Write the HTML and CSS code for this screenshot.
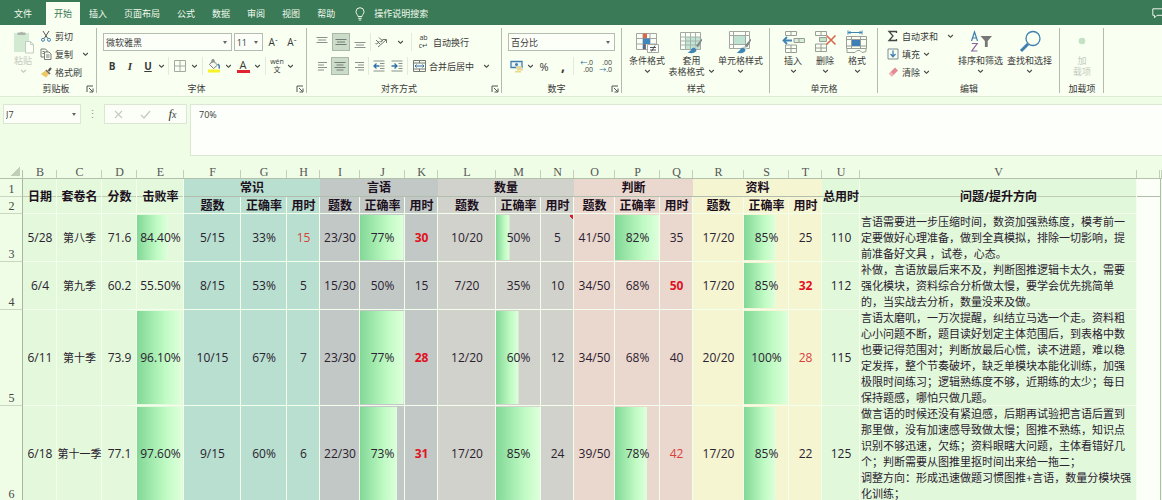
FILE: index.html
```html
<!DOCTYPE html>
<html lang="zh-CN">
<head>
<meta charset="utf-8">
<title>成绩记录表</title>
<link rel="stylesheet" href="styles.css">
</head>
<body>
<svg class="defs" aria-hidden="true">
  <symbol id="chev" viewBox="0 0 7 5"><path d="M1.2 1l2.3 2.3L5.8 1" fill="none" stroke="#444" stroke-width="1.1"/></symbol>
  <symbol id="launch" viewBox="0 0 8 8"><path d="M1 7V1h6M3 3l3.500 3.500M7 3.500V7H3.500" fill="none" stroke="#555" stroke-width="1"/></symbol>
  <symbol id="brush" viewBox="0 0 16 16"><path d="M15 .5l-6 7 2 2 4-7z" fill="#7f8a88"/><path d="M8.500 8l2.500 2.300-1 1.500-2.800-2.200z" fill="#c5cfcb"/><path d="M7 9.500c-3 0-2.500 4-6.500 5 4 1.500 9 .5 9-2.700z" fill="#3f86b5"/></symbol>
</svg>

<div class="app">
  <nav class="tabs">
    <button class="tab file">文件</button>
    <button class="tab active">开始</button>
    <button class="tab">插入</button>
    <button class="tab">页面布局</button>
    <button class="tab">公式</button>
    <button class="tab">数据</button>
    <button class="tab">审阅</button>
    <button class="tab">视图</button>
    <button class="tab">帮助</button>
    <button class="tell-me">
      <svg width="10" height="14" viewBox="0 0 10 14"><path d="M3 9.500C3 8 1 7 1 4.700a4 4 0 0 1 8 0C9 7 7 8 7 9.500zM3.200 11.300h3.600M3.800 13h2.400" fill="none" stroke="#e9f6ea" stroke-width="1"/></svg>
      操作说明搜索
    </button>
    <button class="comment" aria-label="批注"><svg width="10" height="11" viewBox="0 0 10 11"><path d="M10 .8H.8v6.500h1.700v2.500L5 7.300h5" fill="none" stroke="#e9f6ea" stroke-width="1"/></svg></button>
  </nav>

  <div class="ribbon">
    <section class="group clipboard">
      <div class="body">
        <button class="big muted">
          <svg width="24" height="24" viewBox="0 0 24 24"><rect x="3" y="3" width="15" height="19" fill="#d3ead2"/><path d="M6.500 5V2.500h2.700a1.500 1.500 0 0 1 2.600 0h2.700V5z" fill="#a9b5aa"/><path d="M14.500 11.500h5l3 3V23h-8z" fill="#fbfff6" stroke="#c3cdc3"/><path d="M19.500 11.500v3h3" fill="none" stroke="#c3cdc3"/></svg>
          <span>粘贴</span>
          <svg class="chev"><use href="#chev"/></svg>
        </button>
        <div class="stack">
          <button class="line"><svg width="12" height="12" viewBox="0 0 12 12"><path d="M3 1l4.800 7.500M9 1L4.200 8.500" stroke="#555" stroke-width="1" fill="none"/><circle cx="3" cy="9.800" r="1.500" fill="none" stroke="#3f7fb0"/><circle cx="9" cy="9.800" r="1.500" fill="none" stroke="#3f7fb0"/></svg>剪切</button>
          <button class="line"><svg width="12" height="12" viewBox="0 0 12 12"><path d="M4 9H1V1h4.500L7 2.500V4M4.500 4H9l2 2v5.500H4.500zM6 7h3.500M6 9h3.500M2.500 3.500h2M2.500 5.500H4" fill="none" stroke="#6b706b" stroke-width=".9"/></svg>复制<svg class="chev push"><use href="#chev"/></svg></button>
          <button class="line"><svg width="12" height="12" viewBox="0 0 12 12"><path d="M6 4l3.500 3.500-3.500 4L.8 8z" fill="#ecc867"/><path d="M5.500 4.500l4 4 1-1-4-4z" fill="#666"/><path d="M8.500 5l2.500-3" stroke="#555" stroke-width="2"/></svg>格式刷</button>
        </div>
      </div>
      <footer><span>剪贴板</span><svg class="launch"><use href="#launch"/></svg></footer>
    </section>

    <section class="group font">
      <div class="body rows">
        <div class="row">
          <label class="combo family"><select aria-label="字体"><option>微软雅黑</option></select></label>
          <label class="combo size"><select aria-label="字号"><option>11</option></select></label>
          <button class="tool grow" aria-label="增大字号">A<sup>ˆ</sup></button>
          <button class="tool grow" aria-label="减小字号">A<sup>ˇ</sup></button>
        </div>
        <div class="row font-tools">
          <button class="tool"><b>B</b></button>
          <button class="tool serif"><i>I</i></button>
          <button class="tool"><u>U</u></button>
          <svg class="chev"><use href="#chev"/></svg>
          <i class="sep"></i>
          <button class="tool" aria-label="边框"><svg width="12" height="12" viewBox="0 0 12 12"><path d="M.5.5h11v11H.5zM6 .5v11M.5 6h11" fill="none" stroke="#a2aaa2"/></svg></button>
          <svg class="chev"><use href="#chev"/></svg>
          <i class="sep"></i>
          <button class="tool" aria-label="填充颜色"><svg width="14" height="14" viewBox="0 0 14 14"><path d="M6 1.500l4.500 4.500-4 3.500-4-4zM5 4V.8h2v3" fill="#f4f7ee" stroke="#707070" stroke-width=".9"/><path d="M11 5c1.500 1.500 1.500 3.500.8 4.500" fill="none" stroke="#3f7fb0" stroke-width="1.500"/><path d="M1 10.500h12v3H1z" fill="#f6f227"/></svg></button>
          <svg class="chev"><use href="#chev"/></svg>
          <button class="tool color">A</button>
          <svg class="chev"><use href="#chev"/></svg>
          <i class="sep"></i>
          <button class="tool pinyin"><span>wén</span><span>文</span></button>
          <svg class="chev"><use href="#chev"/></svg>
        </div>
      </div>
      <footer><span>字体</span><svg class="launch"><use href="#launch"/></svg></footer>
    </section>

    <section class="group align">
      <div class="body rows">
        <div class="row align-tools">
          <button class="tool" aria-label="顶端对齐"><svg width="12" height="12" viewBox="0 0 12 12"><path d="M.5 1.500h11M2 4h8M.5 6.500h11" stroke="#8a908a" stroke-width="1"/></svg></button>
          <button class="tool on" aria-label="垂直居中"><svg width="12" height="12" viewBox="0 0 12 12"><path d="M.5 3.500h11M2 6h8M.5 8.500h11" stroke="#747c76" stroke-width="1"/></svg></button>
          <button class="tool" aria-label="底端对齐"><svg width="12" height="12" viewBox="0 0 12 12"><path d="M.5 6.500h11M2 9h8M.5 11.500h11" stroke="#8a908a" stroke-width="1"/></svg></button>
          <i class="sep"></i>
          <button class="tool" aria-label="方向"><svg width="14" height="12" viewBox="0 0 14 12"><path d="M4 11l8-7M12.500 7V3.500H9M2 4l4 4M1.500 7a1.500 1.500 0 1 0 2-2M5 1.500l3.500 3.500M5.500 5a1.500 1.500 0 1 0 2-2" fill="none" stroke="#5f655f" stroke-width=".9"/></svg></button>
          <svg class="chev"><use href="#chev"/></svg>
          <i class="sep"></i>
          <button class="line wrap"><span class="abc"><span>ab</span><span>c↵</span></span>自动换行</button>
        </div>
        <div class="row align-tools">
          <button class="tool" aria-label="左对齐"><svg width="12" height="12" viewBox="0 0 12 12"><path d="M2 2.500h9M2 5h6M2 7.500h9M2 10h6" stroke="#8a908a" stroke-width="1"/></svg></button>
          <button class="tool on" aria-label="居中"><svg width="12" height="12" viewBox="0 0 12 12"><path d="M.5 2.500h11M2.500 5h7M.5 7.500h11M2.500 10h7" stroke="#747c76" stroke-width="1"/></svg></button>
          <button class="tool" aria-label="右对齐"><svg width="12" height="12" viewBox="0 0 12 12"><path d="M2 2.500h9M5 5h6M2 7.500h9M5 10h6" stroke="#8a908a" stroke-width="1"/></svg></button>
          <i class="sep"></i>
          <button class="tool" aria-label="减少缩进"><svg width="12" height="12" viewBox="0 0 12 12"><path d="M.5 1h11M7 3.500h4.500M7 6h4.500M7 8.500h4.500M.5 11h11" stroke="#8a908a"/><path d="M6.500 6H1M3.500 3.500L1 6l2.500 2.500" fill="none" stroke="#2f6fa8" stroke-width="1.300"/></svg></button>
          <button class="tool" aria-label="增加缩进"><svg width="12" height="12" viewBox="0 0 12 12"><path d="M.5 1h11M7.500 3.500h4M7.500 6h4M7.500 8.500h4M.5 11h11" stroke="#8a908a"/><path d="M.5 6H6M3.500 3.500L6 6 3.500 8.500" fill="none" stroke="#2f6fa8" stroke-width="1.300"/></svg></button>
          <i class="sep"></i>
          <button class="line wrap"><svg width="13" height="12" viewBox="0 0 13 12"><path d="M.5.5h12v11H.5zM.5 3h12M.5 9h12M6.500.5V3M6.500 9v2.500" fill="none" stroke="#737973"/><path d="M2 6h9M3.500 4.500L2 6l1.500 1.500M9.500 4.500L11 6 9.500 7.500" fill="none" stroke="#2f6fa8"/></svg>合并后居中<svg class="chev push"><use href="#chev"/></svg></button>
        </div>
      </div>
      <footer><span>对齐方式</span><svg class="launch"><use href="#launch"/></svg></footer>
    </section>

    <section class="group number">
      <div class="body rows">
        <div class="row"><label class="combo format"><select aria-label="数字格式"><option>百分比</option></select></label></div>
        <div class="row number-tools">
          <button class="tool" aria-label="会计数字格式"><svg width="14" height="13" viewBox="0 0 14 13"><path d="M1 1.500h11v6H1z" fill="#eef6f4" stroke="#3f7fb0" stroke-width="1.300"/><circle cx="6.500" cy="4.500" r="1.500" fill="#3f7fb0"/><path d="M6 6.500h6v2H6zM7 9h6v1.500H7zM5 11h6v1.500H5z" fill="#ead98b"/></svg></button>
          <svg class="chev"><use href="#chev"/></svg>
          <button class="tool percent">%</button>
          <button class="tool comma"><b>,</b></button>
          <i class="sep"></i>
          <button class="tool decimal"><span><em>←</em>.0</span><span>.00</span></button>
          <button class="tool decimal"><span>.00</span><span><em>→</em>.0</span></button>
        </div>
      </div>
      <footer><span>数字</span><svg class="launch"><use href="#launch"/></svg></footer>
    </section>

    <section class="group styles">
      <div class="body">
        <button class="big">
          <svg width="24" height="24" viewBox="0 0 24 24"><path d="M1.500 3.500h20v16h-20zM1.500 8.500h20M1.500 14h20M8 3.500v16M15 3.500v16" fill="#fbfff6" stroke="#a3a8a2"/><path d="M8 3.500h4v5H8zM8 14h3v5.500H8z" fill="#d8674b"/><path d="M8 8.500h7V14H8z" fill="#3f86c0"/><path d="M8 14.500h2.500V19H8z" fill="#3d6fa5"/><path d="M12.500 14.500h11v8h-11z" fill="#fff" stroke="#a3a8a2"/><path d="M15 17.500h6M15 20h6M20 15.500l-3.500 6" stroke="#444" stroke-width=".9"/></svg>
          <span>条件格式</span><svg class="chev"><use href="#chev"/></svg>
        </button>
        <button class="big two">
          <svg width="24" height="24" viewBox="0 0 24 24"><path d="M1.500 2.500h20v17h-20z" fill="#fbfff6" stroke="#a3a8a2"/><path d="M6 7h15v12H6z" fill="#c3e5d6"/><path d="M1.500 7h20M1.500 11h20M1.500 15h20M6.500 2.500v17M11.500 2.500v17M16.500 2.500v17" stroke="#a3b4aa"/><use href="#brush" x="8" y="8" width="16" height="16"/></svg>
          <span>套用</span><span class="inline">表格格式<svg class="chev"><use href="#chev"/></svg></span>
        </button>
        <button class="big">
          <svg width="24" height="24" viewBox="0 0 24 24"><path d="M1.500 1.500h20v17h-20zM1.500 5.500h20M1.500 14.500h20M5.500 1.500v17M17.500 1.500v17" fill="#fbfff6" stroke="#a3a8a2"/><path d="M6 6h11v8H6z" fill="#bfe3d3"/><use href="#brush" x="8" y="8" width="16" height="16"/></svg>
          <span>单元格样式</span><svg class="chev"><use href="#chev"/></svg>
        </button>
      </div>
      <footer><span>样式</span></footer>
    </section>

    <section class="group cells">
      <div class="body">
        <button class="big">
          <svg width="24" height="24" viewBox="0 0 24 24"><path d="M4.500 1.500h11v4h-11zM10 1.500v4M4.500 15h11v7.500h-11zM4.500 18.500h11M10 15v7.500" fill="none" stroke="#999e99"/><path d="M13 8.500h10.500v4H13z" fill="#d7eed9" stroke="#999e99"/><path d="M18 8.500v4" stroke="#999e99"/><path d="M11 10.500H3M6 7l-3.500 3.500L6 14" fill="none" stroke="#3f86b5" stroke-width="1.800"/></svg>
          <span>插入</span><svg class="chev"><use href="#chev"/></svg>
        </button>
        <button class="big">
          <svg width="24" height="24" viewBox="0 0 24 24"><path d="M2.500 1.500h11v4h-11zM8 1.500v4M2.500 14h11v7.500h-11zM2.500 18h11M8 14v7.500" fill="none" stroke="#999e99"/><path d="M6.500 7.500h7v4h-7z" fill="#c3e5c5" stroke="#999e99"/><path d="M13.500 5.500l9 9M22.500 5.500l-9 9" stroke="#d8674b" stroke-width="1.600"/></svg>
          <span>删除</span><svg class="chev"><use href="#chev"/></svg>
        </button>
        <button class="big">
          <svg width="24" height="24" viewBox="0 0 24 24"><path d="M3 2.500h14M3 .5v4M17 .5v4M5.500 1L4 2.500 5.500 4M14.500 1L16 2.500 14.500 4" fill="none" stroke="#3f86b5"/><path d="M1.500 6.500h20v12h-20zM1.500 9.500h20M1.500 16h20M6.500 6.500v12M15.500 6.500v12M2 18.500v4h8l2-2h3l2 2 4-1v-3" fill="none" stroke="#999e99"/><path d="M7 10h8v6H7z" fill="#3f7fb8"/></svg>
          <span>格式</span><svg class="chev"><use href="#chev"/></svg>
        </button>
      </div>
      <footer><span>单元格</span></footer>
    </section>

    <section class="group edit">
      <div class="body">
        <div class="stack">
          <button class="line"><svg width="12" height="12" viewBox="0 0 12 12"><path d="M9.500 3V1.500H2L6 6l-4 4.500h7.500V9" fill="none" stroke="#444" stroke-width="1.300"/></svg>自动求和<svg class="chev push"><use href="#chev"/></svg></button>
          <button class="line"><svg width="12" height="12" viewBox="0 0 12 12"><path d="M1 1h10v10H1z" fill="none" stroke="#7d8a90"/><path d="M6 2.500v6M3.500 6L6 8.700 8.500 6" fill="none" stroke="#3f7fb0" stroke-width="1.300"/></svg>填充<svg class="chev"><use href="#chev"/></svg></button>
          <button class="line"><svg width="12" height="12" viewBox="0 0 12 12"><path d="M8 1.500l3 3-6 6-3-3z" fill="#e58a94"/><path d="M3.800 5.700l3 3-2 2-3-3z" fill="#efb4b8"/></svg>清除<svg class="chev"><use href="#chev"/></svg></button>
        </div>
        <button class="big">
          <svg width="24" height="24" viewBox="0 0 24 24"><path d="M2.500 11L5.500 2l3 9M3.500 8h4" fill="none" stroke="#3f7fb0" stroke-width="1.200"/><path d="M2.800 13.500h5.400l-5.400 7.500h5.600" fill="none" stroke="#8c63a3" stroke-width="1.200"/><path d="M11.500 6h11.500l-4.300 5v6h-2.800v-6z" fill="#777"/></svg>
          <span>排序和筛选</span><svg class="chev"><use href="#chev"/></svg>
        </button>
        <button class="big">
          <svg width="24" height="24" viewBox="0 0 24 24"><circle cx="15" cy="8.500" r="7" fill="none" stroke="#3f7fb0" stroke-width="1.300"/><path d="M10 14l-7 7" stroke="#3f7fb0" stroke-width="3"/></svg>
          <span>查找和选择</span><svg class="chev"><use href="#chev"/></svg>
        </button>
      </div>
      <footer><span>编辑</span></footer>
    </section>

    <section class="group addin">
      <div class="body">
        <button class="big muted">
          <svg width="24" height="24" viewBox="0 0 24 24"><circle cx="12" cy="11" r="3.300" fill="#c3e2c4"/></svg>
          <span>加</span><span>载项</span>
        </button>
      </div>
      <footer><span>加载项</span></footer>
    </section>
  </div>

  <div class="formula">
    <label class="combo name"><input aria-label="名称框" value="J7"></label>
    <span class="dots">⋮</span>
    <div class="fx">
      <button aria-label="取消"><svg width="9" height="9" viewBox="0 0 9 9"><path d="M1 1l7 7M8 1L1 8" stroke="#c2cbc0" stroke-width="1.100"/></svg></button>
      <button aria-label="输入"><svg width="11" height="9" viewBox="0 0 11 9"><path d="M1 5l3 3 6-7" fill="none" stroke="#c2cbc0" stroke-width="1.300"/></svg></button>
      <button class="fn"><i>f</i><i class="sub">x</i></button>
    </div>
    <textarea aria-label="编辑栏">70%</textarea>
  </div>

  <main class="sheet">
    <table>
      <colgroup>
        <col class="w23"><col class="w34"><col class="w45"><col class="w35"><col class="w47">
        <col class="w57"><col class="w46"><col class="w33">
        <col class="w40"><col class="w45"><col class="w33">
        <col class="w58"><col class="w45"><col class="w33">
        <col class="w41"><col class="w45"><col class="w33">
        <col class="w51"><col class="w45"><col class="w33">
        <col class="w38"><col><col class="w23"><col class="w2">
      </colgroup>
      <thead>
        <tr class="letters">
          <th class="corner"></th><th>B</th><th>C</th><th>D</th><th>E</th><th>F</th><th>G</th><th>H</th><th>I</th><th>J</th><th>K</th><th>L</th><th>M</th><th>N</th><th>O</th><th>P</th><th>Q</th><th>R</th><th>S</th><th>T</th><th>U</th><th>V</th><th></th><th></th>
        </tr>
      </thead>
      <tbody>
        <tr class="r1">
          <th class="num">1</th>
          <th class="merged" rowspan="2">日期</th><th class="merged" rowspan="2">套卷名</th><th class="merged" rowspan="2">分数</th><th class="merged" rowspan="2">击败率</th>
          <th class="teal top" colspan="3">常识</th><th class="slate top" colspan="3">言语</th><th class="gray top" colspan="3">数量</th><th class="pink top" colspan="3">判断</th><th class="sand top" colspan="3">资料</th>
          <th class="mint merged" rowspan="2">总用时</th><th class="mint merged" rowspan="2">问题/提升方向</th><td class="blank top"></td><td class="edge"></td>
        </tr>
        <tr class="r2">
          <th class="num">2</th>
          <th class="teal">题数</th><th class="teal">正确率</th><th class="teal">用时</th>
          <th class="slate">题数</th><th class="slate">正确率</th><th class="slate">用时</th>
          <th class="gray">题数</th><th class="gray">正确率</th><th class="gray">用时</th>
          <th class="pink">题数</th><th class="pink">正确率</th><th class="pink">用时</th>
          <th class="sand">题数</th><th class="sand">正确率</th><th class="sand">用时</th>
          <td class="blank"></td><td class="edge"></td>
        </tr>
        <tr class="short">
          <th class="num">3</th>
          <td>5/28</td><td class="cn">第八季</td><td>71.6</td><td class="bar" style="--fill:66%">84.40%</td>
          <td class="teal">5/15</td><td class="teal">33%</td><td class="teal red">15</td>
          <td class="slate">23/30</td><td class="slate bar" style="--fill:97%">77%</td><td class="slate hot">30</td>
          <td class="gray">10/20</td><td class="gray bar" style="--fill:30%">50%</td><td class="gray note">5</td>
          <td class="pink">41/50</td><td class="pink bar" style="--fill:98%">82%</td><td class="pink">35</td>
          <td class="sand">17/20</td><td class="sand bar" style="--fill:70%">85%</td><td class="sand">25</td>
          <td class="mint">110</td>
          <td class="mint text">言语需要进一步压缩时间，数资加强熟练度，模考前一<br>定要做好心理准备，做到全真模拟，排除一切影响，提<br>前准备好文具 ，试卷，心态。</td><td class="blank"></td><td class="edge"></td>
        </tr>
        <tr class="short">
          <th class="num">4</th>
          <td>6/4</td><td class="cn">第九季</td><td>60.2</td><td>55.50%</td>
          <td class="teal">8/15</td><td class="teal">53%</td><td class="teal">5</td>
          <td class="slate">15/30</td><td class="slate">50%</td><td class="slate">15</td>
          <td class="gray">7/20</td><td class="gray">35%</td><td class="gray">10</td>
          <td class="pink">34/50</td><td class="pink">68%</td><td class="pink hot">50</td>
          <td class="sand">17/20</td><td class="sand bar" style="--fill:70%">85%</td><td class="sand hot">32</td>
          <td class="mint">112</td>
          <td class="mint text">补做，言语放最后来不及，判断图推逻辑卡太久，需要<br>强化模块，资料综合分析做太慢，要学会优先挑简单<br>的，当实战去分析，数量没来及做。</td><td class="blank"></td><td class="edge"></td>
        </tr>
        <tr class="tall">
          <th class="num">5</th>
          <td>6/11</td><td class="cn">第十季</td><td>73.9</td><td class="bar" style="--fill:94%">96.10%</td>
          <td class="teal">10/15</td><td class="teal">67%</td><td class="teal">7</td>
          <td class="slate">23/30</td><td class="slate bar" style="--fill:97%">77%</td><td class="slate hot">28</td>
          <td class="gray">12/20</td><td class="gray bar" style="--fill:50%">60%</td><td class="gray">12</td>
          <td class="pink">34/50</td><td class="pink">68%</td><td class="pink">40</td>
          <td class="sand">20/20</td><td class="sand bar" style="--fill:98%">100%</td><td class="sand red">28</td>
          <td class="mint">115</td>
          <td class="mint text">言语太磨叽，一万次提醒，纠结立马选一个走。资料粗<br>心小问题不断，题目读好划定主体范围后，到表格中数<br>也要记得范围对；判断放最后心慌，读不进题，难以稳<br>定发挥，整个节奏破坏，缺乏单模块本能化训练，加强<br>极限时间练习；逻辑熟练度不够，近期练的太少；每日<br>保持题感，哪怕只做几题。</td><td class="blank"></td><td class="edge"></td>
        </tr>
        <tr class="tall">
          <th class="num">6</th>
          <td>6/18</td><td class="cn">第十一季</td><td>77.1</td><td class="bar" style="--fill:96%">97.60%</td>
          <td class="teal">9/15</td><td class="teal">60%</td><td class="teal">6</td>
          <td class="slate">22/30</td><td class="slate bar" style="--fill:83%">73%</td><td class="slate hot">31</td>
          <td class="gray">17/20</td><td class="gray bar" style="--fill:98%">85%</td><td class="gray">24</td>
          <td class="pink">39/50</td><td class="pink bar" style="--fill:71%">78%</td><td class="pink red">42</td>
          <td class="sand">17/20</td><td class="sand bar" style="--fill:70%">85%</td><td class="sand">22</td>
          <td class="mint">125</td>
          <td class="mint text">做言语的时候还没有紧迫感，后期再试验把言语后置到<br>那里做，没有加速感导致做太慢；图推不熟练，知识点<br>识别不够迅速，欠练；资料眼瞎大问题，主体看错好几<br>个；判断需要从图推里抠时间出来给一拖二；<br>调整方向：形成迅速做题习惯图推+言语，数量分模块强<br>化训练；</td><td class="blank"></td><td class="edge"></td>
        </tr>
      </tbody>
    </table>
  </main>
</div>
</body>
</html>
```
FILE: styles.css
```css
* { box-sizing: border-box; }

body {
  margin: 0;
  font: 9px/11px "Open Sans", "Noto Sans CJK SC", sans-serif;
  color: #3a3a3a;
  background: #effde6;
}

button, select, input, textarea {
  margin: 0;
  padding: 0;
  border: 0;
  border-radius: 0;
  background: none;
  color: inherit;
  font: inherit;
  outline: 0;
  white-space: nowrap;
}

svg { flex: none; display: block; }
.defs { width: 0; height: 0; position: absolute; }

.app {
  height: 100vh;
  display: flex;
  flex-direction: column;
  overflow: hidden;
}

/* Tab strip */
.tabs {
  flex: none;
  display: flex;
  align-items: stretch;
  gap: 1px;
  height: 25px;
  padding: 2px 0 0 6px;
  background: #3b7a56;
  color: #f2fbf0;
}
.tab { padding: 0 8px; }
.tab.file { margin-right: 5px; }
.tab.active { background: #f9fff1; color: #3b7a56; }
.tell-me { display: flex; align-items: center; gap: 9px; margin-left: 11px; }
.comment { margin-left: auto; overflow: hidden; }

/* Ribbon */
.ribbon {
  flex: none;
  display: flex;
  height: 72px;
  background: #f9fff1;
  border-bottom: 1px solid #dcebd3;
}
.group {
  flex: none;
  display: flex;
  flex-direction: column;
  justify-content: space-between;
  background: linear-gradient(#b4bbb0, #b4bbb0) no-repeat right 3px / 1px 65px;
}
.clipboard { width: 97px; }
.font { width: 210px; }
.align { width: 195px; }
.number { width: 120px; }
.styles { width: 148px; }
.cells { width: 108px; }
.edit { width: 182px; }
.addin { width: 44px; }

.group footer {
  display: flex;
  align-items: center;
  height: 15px;
  padding: 0 3px 0 14px;
}
.group footer span { flex: 1; text-align: center; }
.clipboard footer { padding-left: 26px; }
.font footer, .number footer { padding-left: 0; }
.align footer { padding-left: 0; }
.styles footer, .cells footer, .edit footer, .addin footer { padding: 0; }
.launch { width: 8px; height: 8px; }
.chev { width: 7px; height: 5px; }

.body { display: flex; padding-top: 5px; }
.body.rows {
  flex-direction: column;
  gap: 6px;
  padding: 8px 6px 0;
}
.row { display: flex; align-items: center; height: 18px; }

.big {
  display: flex;
  flex-direction: column;
  align-items: center;
}
.big > svg:first-child { margin-bottom: 1px; }
.big .chev { margin-top: 3px; }
.big .inline { display: flex; gap: 3px; }
.muted { color: #c4ccc0; }
.muted .chev { opacity: .3; }

.stack { display: flex; flex-direction: column; margin-top: -3px; }
.line { display: flex; align-items: center; gap: 3px; height: 18px; }
.push { margin-left: 6px; }

.clipboard .body { padding-left: 12px; }
.clipboard .big { width: 22px; }
.clipboard .stack { margin-left: 6px; }
.styles .body { justify-content: space-between; padding: 5px 7px 0; }
.big.two { padding-left: 0; }
.cells .body { padding-left: 7px; }
.cells .big { width: 32px; }
.edit .body { padding-left: 9px; }
.edit .stack { width: 69px; }
.edit .big { width: 49px; }
.addin .body { justify-content: center; }

.combo {
  display: flex;
  align-items: center;
  height: 18px;
  padding: 0 4px 0 2px;
  background: #fcfff8;
  border: 1px solid #b5bcb1;
}
.combo::after {
  content: "";
  border: 2px solid transparent;
  border-top: 3px solid #666;
  border-bottom: 0;
}
.combo select, .combo input { flex: 1; min-width: 0; appearance: none; }
.family { width: 130px; margin-right: 2px; }
.size { width: 30px; }
.format { width: 107px; }

.tool {
  display: flex;
  align-items: center;
  justify-content: center;
  width: 18px;
  height: 18px;
}
.tool.on { background: #cbdcc8; border: 1px solid #a9b8a7; }
.tool b, .tool u { font-size: 10px; font-weight: 700; }
.tool.serif { font: 700 11px "Liberation Serif", serif; }
.grow { font-size: 10px; margin-left: 1px; }
.grow sup { font-size: 8px; line-height: 8px; }
.sep { width: 1px; height: 18px; background: #e3ebdc; }

.font-tools {
  display: grid;
  grid-template-columns: 18px 18px 18px 9px 5px 18px 11px 5px 18px 11px 18px 11px 5px 18px 9px;
  justify-items: center;
}
.tool.color {
  width: 13px;
  height: 13px;
  border-bottom: 3px solid #e0232e;
  font-size: 11px;
}
.pinyin { flex-direction: column; font-size: 7px; line-height: 8px; }

.align-tools { gap: 1px; }
.align-tools .chev { margin: 0 6px; }
.wrap { padding-left: 4px; }
.abc {
  display: flex;
  flex-direction: column;
  width: 13px;
  font-size: 7px;
  line-height: 8px;
}

.number-tools { gap: 1px; }
.percent { font-size: 11px; }
.tool.comma b { font-size: 14px; line-height: 10px; }
.decimal { flex-direction: column; align-items: flex-end; font-size: 7px; line-height: 7px; }
.decimal em { color: #2f6fa8; font-style: normal; }

/* Formula bar */
.formula {
  flex: none;
  display: flex;
  align-items: flex-start;
  padding: 7px 0 5px 3px;
}
.formula .combo { width: 78px; height: 20px; border-color: #dbe6d3; }
.dots { width: 23px; line-height: 20px; font-size: 11px; text-align: center; color: #999; }
.fx {
  display: flex;
  width: 83px;
  height: 20px;
  margin-right: 3px;
  background: #fcfff8;
  border: 1px solid #dbe6d3;
}
.fx button { flex: 1; display: flex; align-items: center; justify-content: center; }
.fn { font: 13px "Liberation Serif", serif; }
.fn .sub { font-size: 10px; }
.formula textarea {
  flex: 1;
  height: 52px;
  padding: 4px 8px;
  resize: none;
  background: #fcfffa;
  border: 1px solid #dbe6d3;
  border-right: 0;
}

/* Worksheet */
.sheet { flex: 1; min-height: 0; overflow: hidden; }
table {
  width: 100%;
  table-layout: fixed;
  border-spacing: 0;
  color: #2b2130;
}
.w2 { width: 2px; } .w23 { width: 23px; } .w33 { width: 33px; } .w34 { width: 34px; }
.w35 { width: 35px; } .w38 { width: 38px; } .w40 { width: 40px; } .w41 { width: 41px; }
.w45 { width: 45px; } .w46 { width: 46px; } .w47 { width: 47px; } .w51 { width: 51px; }
.w57 { width: 57px; } .w58 { width: 58px; }

th, td {
  padding: 0;
  background-color: #e4f9dc;
  box-shadow: inset -1px -1px #f3ffec;
  font-size: 12px;
  line-height: 16px;
  text-align: center;
  white-space: nowrap;
}
th { font-weight: 700; color: #1c1020; }

.letters th {
  height: 18px;
  padding-top: 4px;
  background: linear-gradient(#c3cfbb, #c3cfbb) no-repeat right bottom / 1px 9px #effde6;
  box-shadow: inset 0 -1px #b3c1ab;
  font: 12px/12px "Liberation Serif", serif;
  color: #555;
}
.letters th.corner {
  background:
    linear-gradient(#b3c1ab, #b3c1ab) no-repeat right bottom / 1px 9px,
    linear-gradient(to bottom right, transparent 50%, #c0cdb9 50%) no-repeat 10px 5px / 10px 10px #effde6;
}
th.num {
  vertical-align: bottom;
  padding-bottom: 2px;
  background: #effde6;
  box-shadow: inset -1px 0 #a9b8a2, inset 0 -1px #c9d6c1;
  font: 12px/12px "Liberation Serif", serif;
  color: #444;
}
.r1 { height: 18px; }
.r2 { height: 17px; }
.short { height: 48px; }
.tall { height: 96px; }

.r1 th, .r2 th { line-height: 16px; }
.r1 th.num, .r2 th.num { line-height: 12px; }

th.merged {
  background-image: linear-gradient(#bccdb4, #bccdb4);
  background-repeat: no-repeat;
  background-position: 0 17px;
  background-size: 100% 1px;
}
.top { box-shadow: inset 0 -1px #b3bdae; }

td.cn { font-size: 11px; }
td.text { padding-left: 1px; font-size: 11px; text-align: left; }

.teal { background-color: #b8dfcf; }
.slate { background-color: #c2c8c6; }
.gray { background-color: #d1d2cb; }
.pink { background-color: #ead8cf; }
.sand { background-color: #f6f5d2; }
.mint { background-color: #e1f8da; }
.blank { background-color: #fbfff7; }
.edge { background-color: #effde6; box-shadow: inset 1px 0 #b3bdae; }
td.blank { box-shadow: none; }
td.blank.top { box-shadow: inset 0 -1px #b3bdae; }

.bar {
  background-image: linear-gradient(to right, #82d896, #c0fbc4 65%, #dfffdc);
  background-repeat: no-repeat;
  background-position: 0 1px;
  background-size: var(--fill) calc(100% - 3px);
}
.note {
  background-image: linear-gradient(to bottom left, #d3202c 50%, transparent 50%);
  background-repeat: no-repeat;
  background-position: right 1px;
  background-size: 5px 5px;
}
.red { color: #d8423a; }
.hot { color: #e0121f; font-weight: 700; }
```
